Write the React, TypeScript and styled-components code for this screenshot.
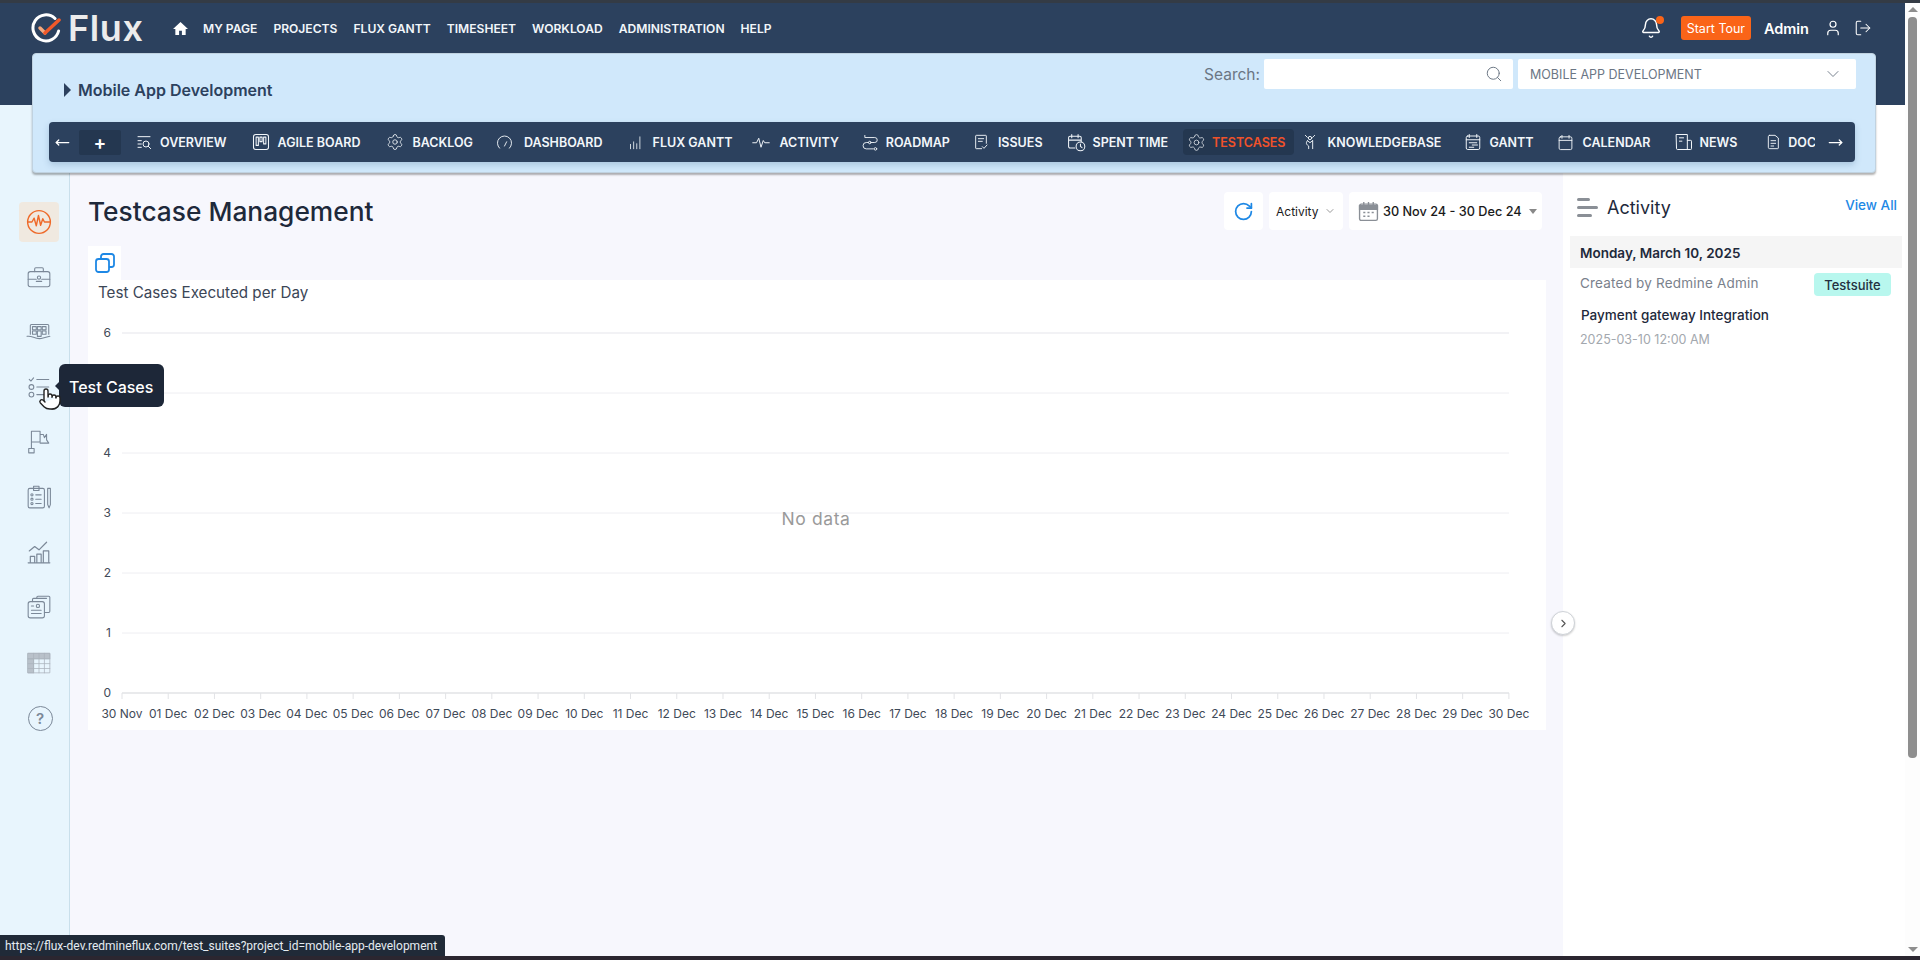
import React from "react";
import styled, { createGlobalStyle } from "styled-components";
import { Bell, ChevronDown, ChevronRight, LogOut, MoveLeft, MoveRight, Pointer, RotateCw, Search, Settings, User } from "lucide-react";

const Global = createGlobalStyle`
html,body{margin:0;padding:0;height:100%;overflow:hidden;background:#fff;}
*{box-sizing:border-box;}
body{font-family:Inter,"Noto Sans",sans-serif;color:#1e293b;}
`;

const Screen = styled.div`
width:1920px;height:960px;display:flex;flex-direction:column;position:relative;overflow:hidden;
`;
const TopStrip = styled.div`height:3px;background:#343b45;flex:none;`;
const BottomStrip = styled.div`height:4px;background:#2b2630;flex:none;`;
const Body = styled.div`flex:1;display:flex;min-height:0;`;
const Page = styled.div`flex:1;display:flex;flex-direction:column;min-width:0;`;

const Scrollbar = styled.div`width:15px;flex:none;background:#fdfdfd;display:flex;flex-direction:column;align-items:center;`;
const ScrollUp = styled.div`margin:4px 0 5px;width:0;height:0;border-left:5px solid transparent;border-right:5px solid transparent;border-bottom:5px solid #8e8e8e;`;
const ScrollThumb = styled.div`width:9px;height:741px;background:#8e8e8e;border-radius:4px;`;
const ScrollDown = styled.div`margin-top:auto;margin-bottom:4px;width:0;height:0;border-left:5px solid transparent;border-right:5px solid transparent;border-top:5px solid #8e8e8e;`;

const HeaderBand = styled.div`height:102px;flex:none;background:#2c415e;position:relative;z-index:5;`;
const TopNav = styled.div`height:50px;display:flex;align-items:center;padding:0 33px 0 31px;`;
const Logo = styled.div`display:flex;align-items:center;width:142px;`;
const LogoWord = styled.span`font-size:36px;font-weight:600;color:#ececec;letter-spacing:.6px;margin-left:7px;line-height:1;`;
const HomeBtn = styled.span`display:flex;color:#fff;margin-right:15px;`;
const TopLinks = styled.div`display:flex;gap:16px;`;
const TopLink = styled.a`font-size:12.1px;font-weight:600;color:#f2f6fa;white-space:nowrap;`;
const TopRight = styled.div`margin-left:auto;display:flex;align-items:center;`;
const BellWrap = styled.span`position:relative;display:flex;color:#fff;margin-right:19px;`;
const BellDot = styled.span`position:absolute;top:-1px;right:-2px;width:8px;height:8px;border-radius:50%;background:#fa6418;`;
const TourButton = styled.button`width:70px;height:24px;border:0;border-radius:3px;background:#fa6418;color:#fff;font:400 12.5px Inter,sans-serif;padding:0;`;
const AdminName = styled.span`font-size:14.5px;font-weight:600;color:#fff;margin:0 15px 0 13px;`;
const TopIcon = styled.span`display:flex;color:#fff;margin-left:${p=>p.$ml||0}px;`;

const ProjectPanel = styled.div`
margin:0 29px 0 32px;height:120px;background:#d0e8fb;border:1px solid #c0d2e0;border-radius:4px;
box-shadow:0 2px 2px rgba(0,0,0,.3);
`;
const PanelTop = styled.div`height:68px;display:flex;justify-content:space-between;padding:5px 19px 0 31px;`;
const ProjectTitle = styled.div`display:flex;align-items:center;gap:7px;margin-top:21px;height:20px;font-size:16px;font-weight:600;color:#2c415e;`;
const Caret = styled.span`width:0;height:0;border-top:7px solid transparent;border-bottom:7px solid transparent;border-left:7px solid #2c415e;`;
const SearchArea = styled.div`display:flex;align-items:center;height:30px;`;
const SearchLabel = styled.span`font-size:15.5px;color:#6b7684;margin-right:4px;`;
const SearchBox = styled.div`width:249px;height:30px;background:#fff;border-radius:2px;display:flex;align-items:center;justify-content:flex-end;padding-right:10px;color:#6b7684;`;
const ProjectSelect = styled.div`width:338px;height:30px;background:#fff;border-radius:2px;margin-left:5px;display:flex;align-items:center;justify-content:space-between;padding:0 13px 0 12px;font-size:12.5px;color:#6b7684;`;

const ModuleBar = styled.div`
margin:0 20px 0 16px;height:40px;background:#2c415e;border-radius:4px;display:flex;align-items:center;
box-shadow:0 3px 6px rgba(60,100,140,.25);
`;
const BarArrow = styled.span`color:#fff;width:${p=>p.$w}px;padding-right:${p=>p.$pr||0}px;display:flex;justify-content:center;flex:none;`;
const PlusBox = styled.span`width:42px;height:25px;background:#243750;border-radius:2px;color:#fff;font-size:19px;font-weight:600;display:flex;align-items:center;justify-content:center;flex:none;margin-right:15px;`;
const ModuleScroller = styled.div`flex:1;min-width:0;display:flex;align-items:center;overflow:hidden;`;
const ModuleItem = styled.a`
display:flex;align-items:center;flex:none;gap:${p=>p.$gap}px;font-size:12.5px;font-weight:600;white-space:nowrap;
height:26px;border-radius:4px;
color:${p=>p.$active?"#f0522a":"#f2f6fa"};
background:${p=>p.$active?"#243750":"transparent"};
margin:${p=>p.$active?"0 8px 0 -5px":`0 ${p.$mr}px 0 0`};
padding:${p=>p.$active?"0 8px 0 4px":"0"};
`;
const IconSvg = styled.svg`fill:none;stroke:currentColor;stroke-linecap:round;stroke-linejoin:round;flex:none;`;
const Row = styled.div`flex:1;display:flex;min-height:0;position:relative;`;

const Sidebar = styled.aside`width:70px;flex:none;background:#e8f5fd;border-right:1px solid #c9dfeb;padding:97px 0 0 19px;display:flex;flex-direction:column;gap:15px;`;
const SideItem = styled.div`
width:40px;height:40px;position:relative;display:flex;align-items:center;justify-content:center;border-radius:4px;
color:${p=>p.$active?"#ee6a2a":"#7b8898"};
background:${p=>p.$active?"#f0e9e0":"transparent"};
`;
const HelpCircle = styled.div`width:25px;height:25px;border:1px solid #7b8898;border-radius:50%;display:flex;align-items:center;justify-content:center;color:#7b8898;font-size:15px;font-weight:600;margin:2px 0 0 2px;`;
const Tip = styled.div`
position:absolute;left:40px;top:-3px;width:105px;height:43px;background:#1d2738;color:#fff;border-radius:6px;
font-size:16px;font-weight:500;display:flex;align-items:center;padding:2px 0 0 10px;white-space:nowrap;z-index:7;
&::before{content:"";position:absolute;left:-4px;top:17px;border-top:5px solid transparent;border-bottom:5px solid transparent;border-right:5px solid #1d2738;}
`;
const HandCursor = styled.span`position:absolute;left:19px;top:20px;z-index:8;display:flex;color:#222;`;

const Main = styled.main`width:1493px;flex:none;background:#f7f7fd;padding:87px 17px 0 18px;position:relative;`;
const TitleRow = styled.div`height:38px;display:flex;align-items:center;justify-content:space-between;padding-right:4px;`;
const PageTitle = styled.h1`margin:0;font-size:26.3px;font-weight:500;color:#1e293b;`;
const Tools = styled.div`display:flex;gap:6px;`;
const ToolBox = styled.div`height:38px;background:#fff;border-radius:4px;display:flex;align-items:center;padding-left:${p=>p.$pad}px;width:${p=>p.$w}px;gap:${p=>p.$gap||5}px;font-size:${p=>p.$fs||12}px;font-weight:${p=>p.$fw||400};color:#1a1a1a;white-space:nowrap;`;
const BlueIcon = styled.span`display:flex;color:#1e88e5;margin:auto;`;
const DateGlyph = styled.svg`flex:none;fill:none;stroke:#8a8f96;stroke-width:1.3;`;
const GreyCaret = styled.span`width:0;height:0;border-left:4px solid transparent;border-right:4px solid transparent;border-top:5px solid #888;margin-left:3px;`;
const CopyButton = styled.div`margin-top:16px;width:33px;height:34px;background:#fff;display:flex;align-items:center;justify-content:center;color:#1e88e5;`;
const ChartCard = styled.section`width:1458px;height:450px;background:#fff;`;
const ChartTitle = styled.div`height:24px;padding:4px 0 0 10px;font-size:15.2px;color:#3b4656;line-height:18px;`;
const ChartLabel = styled.text`font-family:Inter,sans-serif;font-size:${p=>p.$fs||12}px;letter-spacing:${p=>p.$ls||0}px;fill:${p=>p.$fill||"#3f4a58"};`;
const CollapseButton = styled.div`position:absolute;right:-12px;top:506px;width:24px;height:24px;border-radius:50%;background:#fff;border:1px solid #cfd3d8;box-shadow:0 1px 2px rgba(0,0,0,.2);display:flex;align-items:center;justify-content:center;color:#555;z-index:3;`;

const ActivityPanel = styled.aside`flex:1;background:#fff;padding:85px 3px 0 7px;`;
const ActivityHead = styled.div`height:34px;display:flex;align-items:center;padding:0 5px 0 7px;`;
const ActivityLines = styled.span`display:flex;flex-direction:column;gap:5px;margin-right:9px;`;
const ActivityLine = styled.span`height:3px;background:#8a8f96;border-radius:2px;width:${p=>p.$w}px;`;
const ActivityHeading = styled.span`font-size:18px;font-weight:400;color:#1e293b;`;
const ViewAll = styled.a`margin-left:auto;font-size:13.5px;font-weight:500;color:#1e88e5;position:relative;top:-2px;`;
const DateRow = styled.div`margin-top:12px;height:32px;background:#f5f5f5;display:flex;align-items:center;padding:2px 0 0 10px;font-size:13.5px;font-weight:600;color:#1e293b;`;
const CreatedRow = styled.div`display:flex;align-items:center;justify-content:space-between;padding:5px 11px 0 10px;`;
const CreatedBy = styled.span`font-size:13.5px;letter-spacing:.2px;color:#7a818c;position:relative;top:-2px;`;
const TypeBadge = styled.span`width:77px;height:23px;background:#b8f7ee;border-radius:4px;display:flex;align-items:center;justify-content:center;font-size:13px;font-weight:500;color:#243040;`;
const EntryTitle = styled.div`margin:11px 0 0 11px;font-size:13.5px;font-weight:500;color:#1e293b;`;
const EntryDate = styled.div`margin:9px 0 0 10px;font-size:12.5px;color:#a3a8ae;`;

const StatusBar = styled.div`position:absolute;left:0;bottom:4px;width:445px;height:21px;background:#202a38;border-top-right-radius:3px;color:#e5ecf2;font:12px Roboto,sans-serif;display:flex;align-items:center;padding-left:5px;white-space:nowrap;z-index:9;`;

const Ico = ({s=18,w=1.3,children}:{s?:number,w?:number,children:React.ReactNode}) => (
  <IconSvg width={s} height={s} viewBox="0 0 24 24" strokeWidth={w}>{children}</IconSvg>
);

const topLinks = ["MY PAGE","PROJECTS","FLUX GANTT","TIMESHEET","WORKLOAD","ADMINISTRATION","HELP"];

const cal = <><rect x="3" y="4" width="18" height="18" rx="2"/><path d="M3 9h18M7 2v4M17 2v4"/></>;
const modules:{name:string,icon:React.ReactNode,gap:number,mr:number,active?:boolean}[] = [
  {name:"OVERVIEW",gap:8,mr:25,icon:<Ico s={16} w={1.5}><path d="M3 4h18M3 10h5M3 15h5M3 20h5"/><circle cx="15" cy="15" r="4.5"/><path d="M18.5 18.5 22 22"/></Ico>},
  {name:"AGILE BOARD",gap:8,mr:26,icon:<Ico s={18} w={1.4}><rect x="2" y="2" width="20" height="20" rx="3"/><rect x="5.5" y="5.5" width="3" height="11"/><rect x="10.5" y="5.5" width="3" height="6"/><rect x="15.5" y="5.5" width="3" height="9"/></Ico>},
  {name:"BACKLOG",gap:8,mr:23,icon:<Settings size={18} strokeWidth={1.1}/>},
  {name:"DASHBOARD",gap:11,mr:25,icon:<Ico s={17}><path d="M5 20a10 10 0 1 1 14 0"/><path d="M12 17l3-6"/></Ico>},
  {name:"FLUX GANTT",gap:10,mr:20,icon:<Ico s={15}><path d="M4 22v-7M9 22V11M14 22v-8M19 22V3"/></Ico>},
  {name:"ACTIVITY",gap:9,mr:23,icon:<Ico s={18}><path d="M1 13h5l3-6 3 12 3-9 2 3h6"/></Ico>},
  {name:"ROADMAP",gap:7,mr:23,icon:<Ico s={17}><path d="M4 2v3h14a3.5 3.5 0 0 1 0 7h-5M9 12H6a4.5 4.5 0 0 0 0 9h10"/><circle cx="11" cy="12" r="1.8"/><circle cx="19" cy="21" r="1.8"/></Ico>},
  {name:"ISSUES",gap:9,mr:24,icon:<Ico s={16} w={1.4}><path d="M13 22H5a1 1 0 0 1-1-1V3a1 1 0 0 1 1-1h14a1 1 0 0 1 1 1v11M8 7h8M8 11h6M14 19l2.5 2.5 4.5-5"/></Ico>},
  {name:"SPENT TIME",gap:7,mr:20,icon:<Ico s={19}><path d="M10 19H4a2 2 0 0 1-2-2V6a2 2 0 0 1 2-2h12a2 2 0 0 1 2 2v5M2 9h16M6 2v4M14 2v4"/><circle cx="17" cy="17" r="5.5"/><path d="M17 14v3l2 1.5"/></Ico>},
  {name:"TESTCASES",gap:6,mr:0,icon:<Settings size={19} strokeWidth={1.05} color="#d9dee4"/>,active:true},
  {name:"KNOWLEDGEBASE",gap:10,mr:23,icon:<Ico s={16} w={1.4}><circle cx="12" cy="6" r="2.5"/><path d="M5 2l3 3M19 2l-3 3M8 10l4 3 4-3M8 10c-3 4-1 6 2 8v4M16 10v12"/></Ico>},
  {name:"GANTT",gap:7,mr:23,icon:<Ico s={18}>{cal}<path d="M7 13h10M11 16h7M7 19h6"/></Ico>},
  {name:"CALENDAR",gap:9,mr:24,icon:<Ico s={17}>{cal}</Ico>},
  {name:"NEWS",gap:5,mr:28,icon:<Ico s={20} w={1.2}><path d="M3 3h13v18H4a1 1 0 0 1-1-1zM16 10h4a1 1 0 0 1 1 1v9a1 1 0 0 1-1 1h-4M6.5 7h5M6.5 11h3"/></Ico>},
  {name:"DOCUMENTS",gap:7,mr:0,icon:<Ico s={16} w={1.4}><path d="M7 2h8l5 4v15a1 1 0 0 1-1 1H7a2 2 0 0 1-2-2V4a2 2 0 0 1 2-2zM9 10h7M9 14h7M9 18h4"/></Ico>},
];

const sideIcons:React.ReactNode[] = [
  <Ico s={26} w={1.3}><circle cx="12" cy="12" r="10.5"/><path d="M2 12h3.5l2-3.5 2 7 2-9.5 2 9 2-6 1.5 3H22"/></Ico>,
  <Ico s={26} w={1}><rect x="2" y="7" width="20" height="14" rx="2"/><path d="M8 7V4.5a1 1 0 0 1 1-1h6a1 1 0 0 1 1 1V7M2 14h7.5M14.5 14h7.5"/><circle cx="12" cy="12.5" r="1.5"/><path d="M9.5 16h5"/></Ico>,
  <Ico s={26} w={1}><path d="M4 14V6a1 1 0 0 1 1-1h15a1 1 0 0 1 1 1v8"/><rect x="6" y="7" width="3.5" height="3"/><rect x="10.5" y="7" width="3.5" height="3"/><rect x="15" y="7" width="3.5" height="3"/><rect x="6" y="11" width="3.5" height="3"/><rect x="10.5" y="11" width="3.5" height="5"/><rect x="15" y="11" width="3.5" height="3"/><path d="M1 16c5-1 7 3 13 2l8-2"/></Ico>,
  <Ico s={26} w={1}><path d="M3 5l1.5 1.5L7 3.5M10 5h11M10 12h11M10 19h11"/><circle cx="5" cy="12" r="2.2"/><circle cx="5" cy="19" r="2.2"/></Ico>,
  <Ico s={26} w={1}><path d="M5 18V2h8v10H5M13 5h3l1 3 2-3v5l2 3H13"/><rect x="2.5" y="18" width="5" height="4"/></Ico>,
  <Ico s={26} w={1}><rect x="2" y="4" width="15" height="18" rx="1.5"/><path d="M7 2h5v4H7zM9 10h5M9 14h5M9 18h5"/><circle cx="5.5" cy="10" r="1"/><circle cx="5.5" cy="14" r="1"/><circle cx="5.5" cy="18" r="1"/><path d="M20 4h2.5v15l-1.2 3-1.3-3z"/></Ico>,
  <Ico s={26} w={1.1}><path d="M2 22h20M4 21v-5h4v5M10 21v-7h4v7M16 21V11h5v10M3 11l5-4 4 3 7-7"/></Ico>,
  <Ico s={26} w={1}><rect x="2" y="7" width="15" height="15" rx="2"/><path d="M6 7V5a1 1 0 0 1 1-1h12M10 4V3a1 1 0 0 1 1-1h10a1 1 0 0 1 1 1v13a1 1 0 0 1-1 1h-4M5 18h9M5 15h9"/><circle cx="11" cy="11" r="1.5"/><path d="M5 11h2"/></Ico>,
  <Ico s={26} w={.7}><g stroke="#aab2bb"><rect x="2" y="4" width="20" height="5" fill="#b9c1ca"/><rect x="2" y="9" width="5" height="13" fill="#b9c1ca"/><path d="M2 4h20v18H2zM2 9h20M2 13.5h20M2 18h20M7 4v18M12 4v18M17 4v18"/></g></Ico>,
];

const days = ["30 Nov",...Array.from({length:30},(_,i)=>`${String(i+1).padStart(2,"0")} Dec`)];

const TestChart = () => {
  const xs = (i:number) => 34 + i*46.23;
  const yBase = 389;
  return (
    <svg width="1458" height="426" viewBox="0 0 1458 426">
      {[0,1,2,3,4,5,6].map(v=>(
        <g key={v}>
          <path d={`M34 ${yBase-v*60}H1421`} stroke={v===0?"#e2e3e6":"#eeeef2"} strokeWidth={v===0||v===6?1.5:1}/>
          {v!==5 && <ChartLabel x={23} y={yBase-v*60+4} textAnchor="end">{v}</ChartLabel>}
        </g>
      ))}
      {days.map((d,i)=>(
        <g key={d}>
          <path d={`M${xs(i)} ${yBase}v6`} stroke="#e2e3e6"/>
          <ChartLabel x={xs(i)} y={yBase+25} textAnchor="middle">{d}</ChartLabel>
        </g>
      ))}
      <ChartLabel x={728} y={221} textAnchor="middle" $fs={17.5} $ls={.6} $fill="#9a9a9a">No data</ChartLabel>
    </svg>
  );
};

export default function App(){
  return (
    <Screen>
      <Global/>
      <TopStrip/>
      <Body>
        <Page>
          <HeaderBand>
            <TopNav>
              <Logo>
                <svg width="30" height="30" viewBox="0 0 30 30" fill="none" strokeLinecap="round" strokeLinejoin="round">
                  <path d="M24 5.5A13 13 0 1 0 27.6 18" stroke="#fff" strokeWidth="3"/>
                  <path d="M9 15l5 5" stroke="#f4a77c" strokeWidth="3.5"/>
                  <path d="M14 20L28 7" stroke="#f0592a" strokeWidth="3.5"/>
                </svg>
                <LogoWord>Flux</LogoWord>
              </Logo>
              <HomeBtn>
                <svg width="15" height="15" viewBox="0 0 16 16" fill="currentColor"><path d="M8 1 0 8.5h2.500V15h4v-4.500h3V15h4V8.500H16z"/></svg>
              </HomeBtn>
              <TopLinks>{topLinks.map(l=><TopLink key={l}>{l}</TopLink>)}</TopLinks>
              <TopRight>
                <BellWrap><Bell size={22} strokeWidth={1.6}/><BellDot/></BellWrap>
                <TourButton>Start Tour</TourButton>
                <AdminName>Admin</AdminName>
                <TopIcon><User size={18} strokeWidth={1.6}/></TopIcon>
                <TopIcon $ml={12}><LogOut size={18} strokeWidth={1.4}/></TopIcon>
              </TopRight>
            </TopNav>
            <ProjectPanel>
              <PanelTop>
                <ProjectTitle><Caret/>Mobile App Development</ProjectTitle>
                <SearchArea>
                  <SearchLabel>Search:</SearchLabel>
                  <SearchBox><Search size={18} strokeWidth={1.3}/></SearchBox>
                  <ProjectSelect>MOBILE APP DEVELOPMENT<ChevronDown size={20} strokeWidth={1.1}/></ProjectSelect>
                </SearchArea>
              </PanelTop>
              <ModuleBar>
                <BarArrow $w={30} $pr={4}><MoveLeft size={15} strokeWidth={2}/></BarArrow>
                <PlusBox>+</PlusBox>
                <ModuleScroller>
                  {modules.map(m=>(
                    <ModuleItem key={m.name} $active={m.active} $gap={m.gap} $mr={m.mr}>{m.icon}{m.name}</ModuleItem>
                  ))}
                </ModuleScroller>
                <BarArrow $w={40}><MoveRight size={15} strokeWidth={2}/></BarArrow>
              </ModuleBar>
            </ProjectPanel>
          </HeaderBand>
          <Row>
            <Sidebar>
              {sideIcons.map((ic,i)=>(
                <SideItem key={i} $active={i===0}>
                  {ic}
                  {i===3 && <>
                    <Tip>Test Cases</Tip>
                    <HandCursor><Pointer size={24} strokeWidth={1.4} fill="#fff"/></HandCursor>
                  </>}
                </SideItem>
              ))}
              <SideItem><HelpCircle>?</HelpCircle></SideItem>
            </Sidebar>
            <Main>
              <TitleRow>
                <PageTitle>Testcase Management</PageTitle>
                <Tools>
                  <ToolBox $w={39} $pad={0}><BlueIcon><RotateCw size={21} strokeWidth={2}/></BlueIcon></ToolBox>
                  <ToolBox $w={74} $pad={7}>Activity<ChevronDown size={12} color="#999"/></ToolBox>
                  <ToolBox $w={193} $pad={9} $gap={4} $fs={12.7} $fw={500}>
                    <DateGlyph width="21" height="21" viewBox="0 0 20 20">
                      <rect x="1.5" y="3" width="17" height="15.5" rx="1.5"/>
                      <path d="M1.5 4.5h17V8h-17z" fill="#8a8f96"/>
                      <path d="M5.5 1v3.500M10 1v3.500M14.500 1v3.500M5 11h2M9 11h2M13 11h2M5 14.500h2M9 14.500h2"/>
                    </DateGlyph>
                    30 Nov 24 - 30 Dec 24<GreyCaret/>
                  </ToolBox>
                </Tools>
              </TitleRow>
              <CopyButton>
                <svg width="20" height="20" viewBox="0 0 20 20" fill="none" stroke="currentColor" strokeWidth="1.8">
                  <rect x="1" y="6" width="13" height="13" rx="2.5"/>
                  <path d="M6 6V3.500A2.500 2.500 0 0 1 8.500 1h8A2.500 2.500 0 0 1 19 3.500v8a2.500 2.500 0 0 1-2.500 2.500H14"/>
                </svg>
              </CopyButton>
              <ChartCard>
                <ChartTitle>Test Cases Executed per Day</ChartTitle>
                <TestChart/>
              </ChartCard>
              <CollapseButton><ChevronRight size={13} strokeWidth={2}/></CollapseButton>
            </Main>
            <ActivityPanel>
              <ActivityHead>
                <ActivityLines>
                  <ActivityLine $w={13}/><ActivityLine $w={21}/><ActivityLine $w={15}/>
                </ActivityLines>
                <ActivityHeading>Activity</ActivityHeading>
                <ViewAll>View All</ViewAll>
              </ActivityHead>
              <DateRow>Monday, March 10, 2025</DateRow>
              <CreatedRow>
                <CreatedBy>Created by Redmine Admin</CreatedBy>
                <TypeBadge>Testsuite</TypeBadge>
              </CreatedRow>
              <EntryTitle>Payment gateway Integration</EntryTitle>
              <EntryDate>2025-03-10 12:00 AM</EntryDate>
            </ActivityPanel>
          </Row>
        </Page>
        <Scrollbar><ScrollUp/><ScrollThumb/><ScrollDown/></Scrollbar>
      </Body>
      <BottomStrip/>
      <StatusBar>https://flux-dev.redmineflux.com/test_suites?project_id=mobile-app-development</StatusBar>
    </Screen>
  );
}
